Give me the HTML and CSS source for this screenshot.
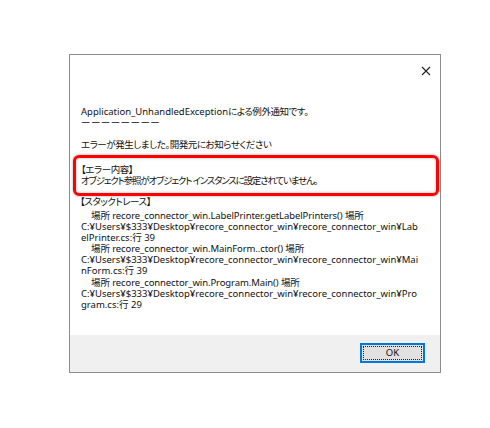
FILE: index.html
```html
<!DOCTYPE html>
<html lang="ja">
<head>
<meta charset="utf-8">
<link rel="stylesheet" href="styles.css">
</head>
<body>
<div class="stage">
  <div class="window">
    <div class="titlebar">
      <svg class="close" width="10" height="10" viewBox="0 0 10 10"><path d="M1 1 L9 9 M9 1 L1 9" stroke="#222" stroke-width="1.1" fill="none"/></svg>
    </div>
    <div class="content">
      <div class="block intro">
        <div class="line">Application_UnhandledException<span class="tight-s">による例外通知です。</span></div>
        <div class="line dashes">ーーーーーーーー</div>
        <div class="line">&nbsp;</div>
        <div class="line tight-s">エラーが発生しました。開発元にお知らせください</div>
      </div>
      <div class="block error">
        <div class="line tight-s">【エラー内容】</div>
        <div class="line tight-l">オブジェクト参照がオブジェクト インスタンスに設定されていません。</div>
        <div class="highlight"></div>
      </div>
      <div class="block heading">
        <div class="line tight-s">【スタックトレース】</div>
      </div>
      <div class="block stack">
        <div class="line indent">場所 recore_connector_win.LabelPrinter.getLabelPrinters() 場所</div>
        <div class="line">C:¥Users¥$333¥Desktop¥recore_connector_win¥recore_connector_win¥Lab</div>
        <div class="line">elPrinter.cs:行 39</div>
        <div class="line indent">場所 recore_connector_win.MainForm..ctor() 場所</div>
        <div class="line">C:¥Users¥$333¥Desktop¥recore_connector_win¥recore_connector_win¥Mai</div>
        <div class="line">nForm.cs:行 39</div>
        <div class="line indent">場所 recore_connector_win.Program.Main() 場所</div>
        <div class="line">C:¥Users¥$333¥Desktop¥recore_connector_win¥recore_connector_win¥Pro</div>
        <div class="line">gram.cs:行 29</div>
      </div>
    </div>
    <div class="footer">
      <button class="ok"><span class="focus">OK</span></button>
    </div>
  </div>
</div>
</body>
</html>
```
FILE: styles.css
```css
html, body {
  margin: 0;
  padding: 0;
  background: #ffffff;
}
.stage {
  width: 490px;
  height: 428px;
  padding: 54px 0 0 69px;
  box-sizing: border-box;
}
.window {
  width: 372px;
  height: 319px;
  border: 1px solid #8c8c8c;
  box-sizing: border-box;
  background: #ffffff;
  display: flex;
  flex-direction: column;
  font-family: "Noto Sans", "Noto Sans CJK JP", sans-serif;
  font-size: 9.5px;
  font-feature-settings: "palt";
  color: #111;
}
.titlebar {
  height: 30px;
  flex: none;
  display: flex;
  justify-content: flex-end;
  align-items: center;
  padding-right: 9px;
  padding-top: 1px;
  box-sizing: border-box;
}
.close {
  display: block;
}
.content {
  flex: 1;
  padding: 21px 0 0 11px;
  box-sizing: border-box;
}
.line {
  line-height: 11px;
  height: 11px;
  white-space: pre;
}
.tight-s {
  letter-spacing: -0.45px;
}
.tight-l {
  letter-spacing: -1.2px;
}
.dashes {
  font-feature-settings: normal;
  letter-spacing: 0.4px;
}
.indent {
  padding-left: 10px;
  letter-spacing: -0.1px;
}
.error {
  position: relative;
  margin-top: 14px;
}
.highlight {
  position: absolute;
  left: -8px;
  top: -9px;
  width: 366px;
  height: 41px;
  box-sizing: border-box;
  border: 3px solid #ff0000;
  border-radius: 6px;
  box-shadow: 0 0 3px rgba(0, 0, 0, 0.35), inset 0 0 3px rgba(0, 0, 0, 0.3);
}
.heading {
  margin-top: 10px;
  margin-left: -1px;
}
.stack {
  margin-top: 3px;
}
.stack .line {
  line-height: 11.1px;
  height: 11.1px;
}
.footer {
  height: 37px;
  flex: none;
  background: #f0f0f0;
  display: flex;
  justify-content: flex-end;
  align-items: flex-start;
  padding: 8px 15px 0 0;
  box-sizing: border-box;
}
.ok {
  width: 65px;
  height: 20px;
  border: 2px solid #0078d7;
  background: #e1e1e1;
  padding: 1px;
  margin: 0;
  box-sizing: border-box;
  font-family: "Noto Sans", sans-serif;
  font-size: 9.5px;
  color: #111;
  display: flex;
}
.focus {
  flex: 1;
  border: 1px dotted #222;
  display: flex;
  align-items: center;
  justify-content: center;
  line-height: 1;
}
```
